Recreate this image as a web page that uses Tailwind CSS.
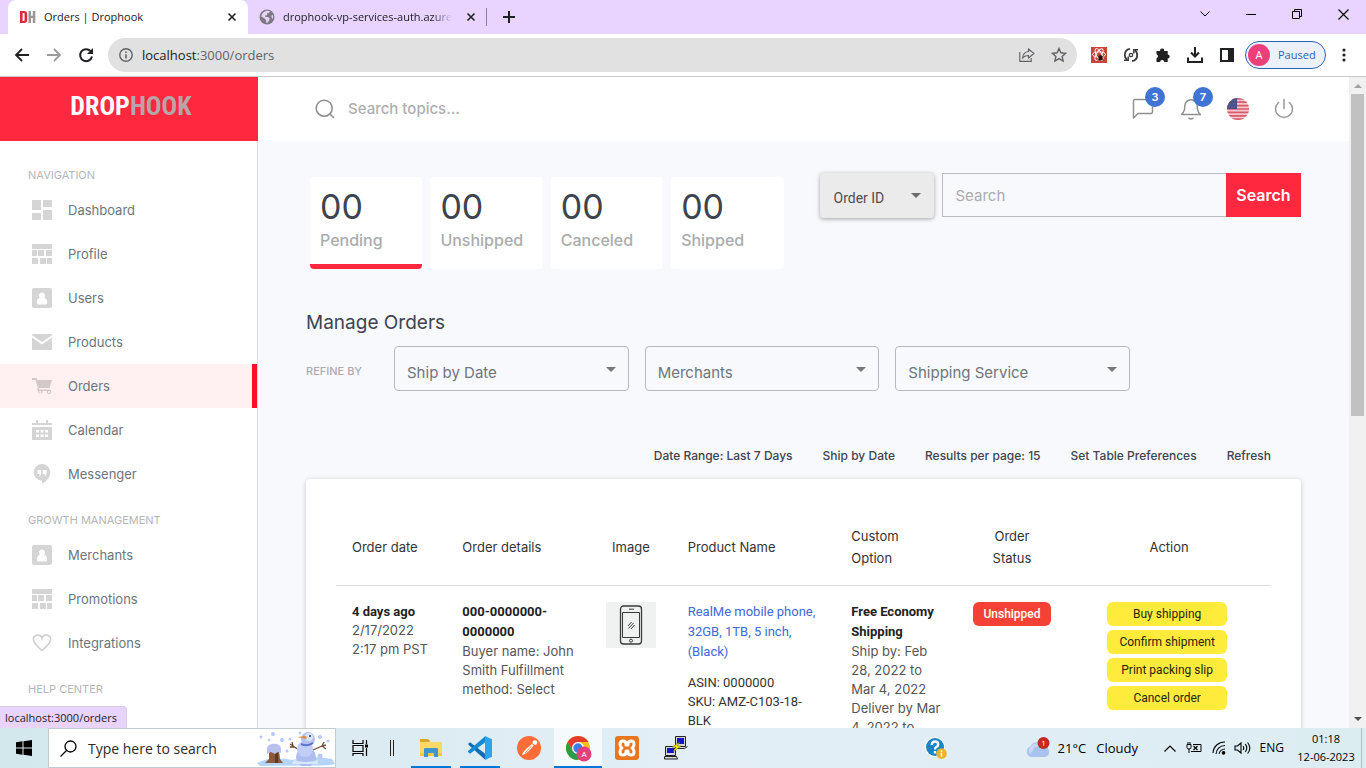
<!DOCTYPE html>
<html lang="en">
<head>
<meta charset="utf-8">
<title>Orders | Drophook</title>
<script src="https://cdn.jsdelivr.net/npm/@tailwindcss/browser@4"></script>
</head>
<body class="flex h-screen flex-col overflow-hidden bg-white font-['Inter','Liberation_Sans',sans-serif] text-[13px] text-[#3d4450]">

<!-- shared symbols -->
<svg class="hidden" aria-hidden="true">
  <symbol id="grid4" viewBox="0 0 20 20"><path d="M0 0h9v10H0zM11 0h9v7h-9zM0 13h9v7H0zM11 10h9v10h-9z"/></symbol>
  <symbol id="tiles" viewBox="0 0 20 20"><path d="M0 0h20v5H0zM0 6h5v6H0zM6 6h6v6H6zM14 6h6v6h-6zM0 14h6v6H0zM8 14h6v6H8zM15 14h5v6h-5z"/></symbol>
  <symbol id="person" viewBox="0 0 20 20"><path fill-rule="evenodd" d="M2 0h16a2 2 0 0 1 2 2v16a2 2 0 0 1-2 2H2a2 2 0 0 1-2-2V2a2 2 0 0 1 2-2zm8 4.500a3 3 0 0 0-2.200 5.100C6 10.300 4.800 12 4.800 14.500c0 1.400.5 2 1.700 2h7c1.200 0 1.700-.6 1.700-2 0-2.500-1.200-4.200-3-4.900A3 3 0 0 0 10 4.500z"/></symbol>
  <symbol id="caret" viewBox="0 0 10 5"><path d="M0 0h10L5 5z"/></symbol>
  <symbol id="close" viewBox="0 0 10 10"><path d="M1.500 1.500l7 7M8.500 1.500l-7 7" stroke="#202124" stroke-width="1.600"/></symbol>
</svg>

<!-- tab strip -->
<header class="flex h-[34px] shrink-0 items-stretch bg-[#e8d4ff] pl-2 font-['Open_Sans','Noto_Sans',sans-serif] text-[11px] text-[#202124]">
  <div class="flex w-[240px] items-center rounded-t-lg bg-white pl-3 pr-[11px]">
    <svg class="h-3 w-4 shrink-0" viewBox="0 0 16 12"><path fill="#e3263a" fill-rule="evenodd" d="M0 0h4c2 0 3.200 1 3.200 3v6c0 2-1.200 3-3.200 3H0zm2.600 2v8h.9c.8 0 1.100-.4 1.100-1.200V3.200c0-.8-.3-1.200-1.100-1.200z"/><path fill="#9a9596" d="M8.500 0h2.500v4.700h1.800V0h2.500v12h-2.500V7H11v5H8.500z"/></svg>
    <span class="ml-2 flex-1">Orders | Drophook</span>
    <button aria-label="Close tab"><svg class="size-[10px]"><use href="#close"/></svg></button>
  </div>
  <div class="flex w-[231px] items-center pl-[11px] pr-[3px]">
    <svg class="size-4 shrink-0" viewBox="0 0 16 16"><circle cx="8" cy="8" r="7.500" fill="#7f7b85"/><path fill="#e8d4ff" d="M6.500 2.200c1.300-.7 3.500-.3 4.600.4L9.500 4.100 8 4.300v1.900l-2 .2.300 1.500H9l1.700 1.700-.6 2-2 2.300-1-.5.200-2L5.400 9.300 2.300 7.400c.3-2.400 2-4.500 4.200-5.200zm5.800 4.600 1.600-.7c.4 1.500 0 3.200-.7 4.200z"/></svg>
    <span class="ml-2 flex-1 overflow-hidden whitespace-nowrap [mask-image:linear-gradient(to_right,black_88%,transparent)]">drophook-vp-services-auth.azure</span>
    <button class="ml-3.5" aria-label="Close tab"><svg class="size-[10px]"><use href="#close"/></svg></button>
  </div>
  <div class="my-2 ml-[7px] w-px bg-[#8c8199]"></div>
  <button class="ml-4" aria-label="New tab"><svg class="size-3" viewBox="0 0 12 12"><path d="M6 0v12M0 6h12" stroke="#202124" stroke-width="2"/></svg></button>
  <div class="ml-auto flex items-center pr-[17px] pb-1.5 text-black">
    <button class="mr-9" aria-label="Search tabs"><svg class="h-[6px] w-[10px]" viewBox="0 0 10 6"><path d="M.5.500 5 5 9.500.500" fill="none" stroke="currentColor"/></svg></button>
    <button class="mr-9" aria-label="Minimise"><svg class="h-[10px] w-[10px]" viewBox="0 0 10 10"><path d="M0 5.500h10" stroke="currentColor"/></svg></button>
    <button class="mr-9" aria-label="Restore"><svg class="size-[10px]" viewBox="0 0 10 10"><path d="M.5 2.500h7v7h-7zM2.500 2.500v-2h7v7h-2" fill="none" stroke="currentColor"/></svg></button>
    <button aria-label="Close window"><svg class="size-[11px]" viewBox="0 0 11 11"><path d="M.5.500l10 10M10.500.500l-10 10" stroke="currentColor" stroke-width="1.200"/></svg></button>
  </div>
</header>

<!-- address bar -->
<div class="flex h-[43px] shrink-0 items-center border-b border-[#c8c8c8] bg-white pl-3.5 pr-5 font-['Open_Sans','Noto_Sans',sans-serif] text-[#202124]">
  <button aria-label="Back"><svg class="size-4" viewBox="0 0 16 16"><path d="M15 8H2M8 2 2 8l6 6" fill="none" stroke="currentColor" stroke-width="1.800"/></svg></button>
  <button class="ml-4 text-[#9b9b9b]" aria-label="Forward"><svg class="size-4" viewBox="0 0 16 16"><path d="M1 8h13M8 2l6 6-6 6" fill="none" stroke="currentColor" stroke-width="1.800"/></svg></button>
  <button class="ml-4" aria-label="Reload"><svg class="size-4" viewBox="0 0 16 16"><path d="M12.500 4A6 6 0 1 0 14 9.500" fill="none" stroke="currentColor" stroke-width="2"/><path d="M15 1v6H9z" fill="currentColor"/></svg></button>
  <div class="ml-3.5 flex h-[34px] flex-1 items-center rounded-full bg-[#e1e1e1] pl-[11px] pr-2.5 text-[#5f6368]">
    <svg class="size-[14px] shrink-0" viewBox="0 0 14 14"><circle cx="7" cy="7" r="6.200" fill="none" stroke="currentColor" stroke-width="1.400"/><path d="M6.200 6.200h1.600v4.300H6.200zM6.200 3.500h1.600v1.600H6.200z" fill="currentColor"/></svg>
    <span class="ml-[9px] flex-1 pt-px text-[13px]"><span class="text-[#202124]">localhost</span>:3000/orders</span>
    <button aria-label="Share"><svg class="size-4" viewBox="0 0 16 16" fill="none" stroke="currentColor" stroke-width="1.100"><path d="M.8 5v9.400h11.400V11"/><path d="M9.500 2l5.500 4.500L9.500 11V8.500c-3 0-4.600.8-6 3 .3-4 2.400-6.600 6-7z"/></svg></button>
    <button class="ml-4" aria-label="Bookmark"><svg class="size-4" viewBox="0 0 16 16"><path d="M8 1.500l1.900 4.300 4.700.5-3.500 3.100 1 4.600L8 11.600 3.900 14l1-4.600L1.400 6.300l4.700-.5z" fill="none" stroke="currentColor" stroke-width="1.400"/></svg></button>
  </div>
  <div class="ml-3.5 flex items-center gap-4">
    <svg class="size-4" viewBox="0 0 16 16"><rect width="16" height="16" fill="#c9453b"/><g fill="none" stroke="#fff" stroke-width=".9"><ellipse cx="8" cy="7.500" rx="6.500" ry="2.600"/><ellipse cx="8" cy="7.500" rx="6.500" ry="2.600" transform="rotate(60 8 7.500)"/><ellipse cx="8" cy="7.500" rx="6.500" ry="2.600" transform="rotate(120 8 7.500)"/></g><ellipse cx="9.500" cy="10.800" rx="2" ry="2.800" fill="#2b1410"/><path d="M6.500 9l6 4M12.500 9l-6 4" stroke="#2b1410" stroke-width=".8"/></svg>
    <svg class="size-4" viewBox="0 0 16 16" fill="none" stroke="#3a3a3a" stroke-width="1.800"><path d="M7 1.800C3.500 2.400 1.800 5 1.800 8c0 2 .8 3.700 2.200 4.800M9 14.200c3.500-.6 5.200-3.200 5.200-6.200 0-2-.8-3.700-2.200-4.800"/><path d="M1 13.300h4.200V9.500M15 2.700h-4.200v3.800" stroke-width="1.500"/><circle cx="8" cy="8" r="1.700" stroke-width="1.300"/></svg>
    <svg class="size-4" viewBox="0 0 16 16"><path fill="#202124" d="M1.500 4h3.700a2 2 0 1 1 3.900 0h3.600v3.500a2 2 0 1 1 0 4V15H9.300a2.100 2.100 0 0 0-4.200 0H1.500v-3.800a2.100 2.100 0 0 0 0-4z"/></svg>
    <svg class="size-4" viewBox="0 0 16 16" fill="none" stroke="#202124" stroke-width="2"><path d="M8 0v9M4 5.500l4 4 4-4M1 10.500V15h14v-4.500"/></svg>
    <svg class="h-[14px] w-4" viewBox="0 0 16 14"><path fill="#202124" fill-rule="evenodd" d="M1 0h14v14H1zM3 2v10h6V2z"/></svg>
  </div>
  <button class="ml-2.5 flex h-[28px] w-[81px] items-center rounded-full border border-[#2a63b5] bg-[#ebf1fb] pl-0.5 text-[11px] text-[#2f5fb3]">
    <span class="flex size-[22px] items-center justify-center rounded-full bg-[#ec407a] text-[11px] text-white">A</span>
    <span class="ml-2">Paused</span>
  </button>
  <button class="ml-4" aria-label="Menu"><svg class="h-[14px] w-1" viewBox="0 0 4 14" fill="#202124"><circle cx="2" cy="2" r="1.600"/><circle cx="2" cy="7" r="1.600"/><circle cx="2" cy="12" r="1.600"/></svg></button>
</div>

<!-- page -->
<div class="relative flex min-h-0 flex-1">

  <aside class="flex w-[258px] shrink-0 flex-col overflow-hidden bg-white">
    <a href="#" class="flex h-16 shrink-0 items-center justify-center bg-[#ff283f] pb-1.5 pl-1 font-['Roboto_Condensed','Liberation_Sans_Narrow','DejaVu_Sans_Condensed',sans-serif] text-[26px] font-bold leading-8 text-white"><span>DROP</span><span class="text-[#b9a5a8]">HOOK</span></a>
    <nav class="flex-1 border-r border-[#dcdce2] pt-2.5 text-[#6c757d] [&_span]:pt-0.5">
      <h2 class="flex h-[37px] items-center pl-7 pt-[11px] text-[11px] text-[#b4b6b8]">NAVIGATION</h2>
      <a href="#" class="flex h-11 items-center pl-8"><svg class="mr-4 size-5 fill-[#d5d5d5]"><use href="#grid4"/></svg><span>Dashboard</span></a>
      <a href="#" class="flex h-11 items-center pl-8"><svg class="mr-4 size-5 fill-[#d5d5d5]"><use href="#tiles"/></svg><span>Profile</span></a>
      <a href="#" class="flex h-11 items-center pl-8"><svg class="mr-4 size-5 fill-[#d5d5d5]"><use href="#person"/></svg><span>Users</span></a>
      <a href="#" class="flex h-11 items-center pl-8"><svg class="mr-4 size-5 fill-[#d5d5d5]" viewBox="0 0 20 20"><path d="M0 2h20v1.300L10 10 0 3.300zM0 5.500l10 7 10-7V18H0z"/></svg><span>Products</span></a>
      <a href="#" class="flex h-11 items-center border-r-[5px] border-[#fb0f2f] bg-[#fff1f1] pl-8"><svg class="mr-4 size-5 fill-[#d3c9c9]" viewBox="0 0 20 20"><path d="M0 2h4.500l.8 2H20l-2.500 8H7.500l-.6 1.500H17a2.300 2.300 0 1 1-2.100 1.600h-4a2.300 2.300 0 1 1-5-.2L5 13.500l.8-2L3.500 4H0zM8.200 15a1 1 0 1 0 .01 0zM17 15a1 1 0 1 0 .01 0z" fill-rule="evenodd"/></svg><span>Orders</span></a>
      <a href="#" class="flex h-11 items-center pl-8"><svg class="mr-4 size-5 fill-[#d5d5d5]" viewBox="0 0 20 20"><path fill-rule="evenodd" d="M0 3h4V0h2v3h8V0h2v3h4v2H0zM0 7h20v13H0zM4 10v2.500h3V10zM8.500 10v2.500h3V10zM13 10v2.500h3V10zM4 14.500V17h3v-2.500zM8.500 14.500V17h3v-2.500zM13 14.500V17h3v-2.500z"/></svg><span>Calendar</span></a>
      <a href="#" class="flex h-11 items-center pl-8"><svg class="mr-4 size-5 fill-[#d5d5d5]" viewBox="0 0 20 20"><path fill-rule="evenodd" d="M10 0a8.300 8.300 0 0 1 8.300 8.300c0 4.700-3.300 8.700-8.300 11.700v-3.300A8.300 8.300 0 0 1 10 0zM5.500 6v4h2.300c0 1-.3 1.700-1.200 2.300 1.800-.3 2.700-1.500 2.700-3.300V6zm5.300 0v4h2.300c0 1-.3 1.700-1.200 2.300 1.800-.3 2.700-1.500 2.700-3.300V6z"/></svg><span>Messenger</span></a>
      <h2 class="flex h-[37px] items-center pl-7 pt-[11px] text-[11px] text-[#b4b6b8]">GROWTH MANAGEMENT</h2>
      <a href="#" class="flex h-11 items-center pl-8"><svg class="mr-4 size-5 fill-[#d5d5d5]"><use href="#person"/></svg><span>Merchants</span></a>
      <a href="#" class="flex h-11 items-center pl-8"><svg class="mr-4 size-5 fill-[#d5d5d5]"><use href="#tiles"/></svg><span>Promotions</span></a>
      <a href="#" class="flex h-11 items-center pl-8"><svg class="mr-4 size-5" viewBox="0 0 20 20"><path fill="none" stroke="#cfcfcf" stroke-width="1.600" d="M10 17.500C5 13 1.400 10 1.400 6.700a4.400 4.400 0 0 1 8.600-1.500 4.400 4.400 0 0 1 8.600 1.500C18.600 10 15 13 10 17.500z"/></svg><span>Integrations</span></a>
      <h2 class="flex h-[37px] items-center pl-7 pt-[11px] text-[11px] text-[#b4b6b8]">HELP CENTER</h2>
    </nav>
  </aside>

  <div class="flex min-w-0 flex-1 flex-col overflow-hidden bg-[#f8f9fd]">
    <div class="flex h-16 shrink-0 items-center bg-white pl-[57px] pr-[54px]">
      <svg class="size-5 text-[#8c8c8c]" viewBox="0 0 20 20"><g fill="none" stroke="currentColor" stroke-width="1.500"><circle cx="9.200" cy="9.200" r="8"/><path d="M15 15l4 4"/></g></svg>
      <input type="text" aria-label="Search topics" placeholder="Search topics..." class="ml-[13px] min-w-0 flex-1 bg-transparent text-[15px] font-medium outline-none placeholder:text-[#adafb1]">
      <button class="relative" aria-label="Messages"><svg class="h-[22px] w-[22px]" viewBox="0 0 22 22"><path fill="none" stroke="#8f8f8f" stroke-width="1.500" stroke-linejoin="round" d="M3 1.500h16a1.500 1.500 0 0 1 1.500 1.500v11a1.500 1.500 0 0 1-1.500 1.500H6L1.500 20V3A1.500 1.500 0 0 1 3 1.500z"/></svg><span class="absolute -top-[11px] left-[13px] flex size-5 items-center justify-center rounded-full bg-[#3f74d4] text-[11px] font-semibold text-white">3</span></button>
      <button class="relative ml-[26px]" aria-label="Notifications"><svg class="size-[22px]" viewBox="0 0 22 22"><path fill="none" stroke="#8f8f8f" stroke-width="1.500" stroke-linejoin="round" d="M1.500 16.500c2.500-2 3.300-4 3.300-8.500a6.200 6.200 0 0 1 12.400 0c0 4.500.8 6.500 3.300 8.500zM9 20.200q2 1.400 4 0" stroke-linecap="round"/></svg><span class="absolute -top-[11px] left-[13px] flex size-5 items-center justify-center rounded-full bg-[#3f74d4] text-[11px] font-semibold text-white">7</span></button>
      <button class="ml-[25px]" aria-label="Language"><svg class="size-[22px] overflow-hidden rounded-full" viewBox="0 0 22 22"><path fill="#f3c9cf" d="M0 0h22v22H0z"/><path stroke="#d95a6b" stroke-width="1.700" d="M0 .8h22M0 4.200h22M0 7.600h22M0 11h22M0 14.400h22M0 17.800h22M0 21.200h22"/><path fill="#4a4f86" d="M0 0h10v11H0z"/><path stroke="#6a6f9f" stroke-dasharray="1 1.500" d="M2 3h8M1 6h8M2 9h8"/></svg></button>
      <button class="ml-6" aria-label="Sign out"><svg class="size-[22px]" viewBox="0 0 22 22"><path fill="none" stroke="#9a9a9a" stroke-width="1.500" stroke-linecap="round" d="M11 1.500v9M5.500 4.500a8.500 8.500 0 1 0 11 0"/></svg></button>
    </div>

    <main class="min-h-0 flex-1 overflow-hidden px-12 pt-8">
      <div class="grid grid-cols-2 gap-8">
        <div class="grid grid-cols-4">
          <div class="m-1 h-[92px] overflow-hidden rounded border-b-[5px] border-[#ff283f] bg-white px-2.5 pt-2"><p class="text-[34px] leading-[43px]">00</p><p class="text-base leading-6 text-[#aaacad] font-medium">Pending</p></div>
          <div class="m-1 h-[92px] rounded bg-white px-2.5 pt-2"><p class="text-[34px] leading-[43px]">00</p><p class="text-base leading-6 text-[#aaacad] font-medium">Unshipped</p></div>
          <div class="m-1 h-[92px] rounded bg-white px-2.5 pt-2"><p class="text-[34px] leading-[43px]">00</p><p class="text-base leading-6 text-[#aaacad] font-medium">Canceled</p></div>
          <div class="m-1 h-[92px] rounded bg-white px-2.5 pt-2"><p class="text-[34px] leading-[43px]">00</p><p class="text-base leading-6 text-[#aaacad] font-medium">Shipped</p></div>
        </div>
        <form class="flex items-start">
          <div class="relative w-[114px]">
            <select aria-label="Search by" class="block h-[45px] w-full appearance-none rounded bg-[#ebebeb] pl-3.5 pt-1 font-['Roboto',sans-serif] text-sm text-[#4f4f4f] shadow-[0_1px_4px_rgba(0,0,0,0.35)]"><option>Order ID</option></select>
            <svg class="pointer-events-none absolute right-[13px] top-5 h-[5px] w-[10px] fill-[#6b6b6b]"><use href="#caret"/></svg>
          </div>
          <input type="text" aria-label="Search orders" placeholder="Search" class="ml-2 h-11 min-w-0 flex-1 border border-r-0 border-[#b9bbc1] bg-transparent px-[13px] text-[15px] outline-none placeholder:text-[#a9acaf]">
          <button type="button" class="h-11 w-[75px] bg-[#ff283f] text-base font-semibold text-white">Search</button>
        </form>
      </div>

      <h1 class="mt-[37px] text-[19px] leading-[26px]">Manage Orders</h1>
      <div class="mt-[10px] flex items-center">
        <span class="w-[88px] pt-1.5 text-[11px] font-medium text-[#a9acb0]">REFINE BY</span>
        <div class="grid max-w-[736px] flex-1 grid-cols-3 gap-4 text-[#6e757e]">
          <div class="relative"><select aria-label="Ship by Date" class="block h-[45px] w-full appearance-none rounded border border-[#b5b9bf] bg-transparent pl-3 pt-2.5 text-[15px]"><option>Ship by Date</option></select><svg class="pointer-events-none absolute right-[13px] top-[21px] h-[5px] w-[10px] fill-[#777]"><use href="#caret"/></svg></div>
          <div class="relative"><select aria-label="Merchants" class="block h-[45px] w-full appearance-none rounded border border-[#b5b9bf] bg-transparent pl-3 pt-2.5 text-[15px]"><option>Merchants</option></select><svg class="pointer-events-none absolute right-[13px] top-[21px] h-[5px] w-[10px] fill-[#777]"><use href="#caret"/></svg></div>
          <div class="relative"><select aria-label="Shipping Service" class="block h-[45px] w-full appearance-none rounded border border-[#b5b9bf] bg-transparent pl-3 pt-2.5 text-[15px]"><option>Shipping Service</option></select><svg class="pointer-events-none absolute right-[13px] top-[21px] h-[5px] w-[10px] fill-[#777]"><use href="#caret"/></svg></div>
        </div>
      </div>

      <div class="mt-[54px] flex h-[22px] items-center justify-end gap-[30px] pr-[30px] text-xs font-medium">
        <a href="#">Date Range: Last 7 Days</a><a href="#">Ship by Date</a><a href="#">Results per page: 15</a><a href="#">Set Table Preferences</a><a href="#">Refresh</a>
      </div>

      <section class="mt-3 rounded bg-white px-[30px] pb-[30px] pt-[30px] shadow-[0_1px_5px_rgba(0,0,0,0.2)]">
        <table class="w-full table-fixed text-left align-top leading-[19px] text-[#555]">
          <thead>
            <tr class="h-[76px] border-b border-[#dcdcdc] leading-[22px] text-[#333] *:px-4 *:font-normal">
              <th class="w-[11.8%]">Order date</th><th class="w-[15.4%]">Order details</th><th class="w-[8.7%] text-center">Image</th><th class="w-[17.5%]">Product Name</th><th class="w-[13%]">Custom Option</th><th class="w-[11.8%] text-center">Order<br>Status</th><th class="w-[21.8%] text-center">Action</th>
            </tr>
          </thead>
          <tbody>
            <tr class="align-top *:px-4 *:pt-4">
              <td class="whitespace-nowrap"><strong class="font-['Roboto',sans-serif] font-bold text-[#222]">4 days ago</strong><br>2/17/2022<br>2:17 pm PST</td>
              <td><strong class="block font-['Roboto',sans-serif] font-bold leading-5 text-[#222]">000-0000000-<br>0000000</strong>Buyer name: John<br>Smith Fulfillment<br>method: Select</td>
              <td><svg class="h-[46px] w-[50px] bg-[#f0f2f2]" viewBox="0 0 50 46" role="img" aria-label="Mobile phone" fill="none" stroke="#3a3a3a"><rect x="14.500" y="4" width="21" height="38" rx="3" stroke-width="1.300"/><path stroke-width="1" d="M16.500 10.500h17v25h-17zM23 7.200h5M22 24l3.500-4M22.500 26.500l5-5.500M25 27l3.500-4"/><circle cx="25" cy="38.700" r="1.500"/></svg></td>
              <td><a href="#" class="block font-['Roboto',sans-serif] leading-5 text-[#4169d9]">RealMe mobile phone, 32GB, 1TB, 5 inch, (Black)</a><p class="mt-[11px] font-['Roboto',sans-serif] text-[#333]">ASIN: 0000000<br>SKU: AMZ-C103-18-<br>BLK</p></td>
              <td class="whitespace-nowrap"><strong class="block font-['Roboto',sans-serif] font-bold leading-5 text-[#222]">Free Economy<br>Shipping</strong>Ship by: Feb<br>28, 2022 to<br>Mar 4, 2022<br>Deliver by Mar<br>4, 2022 to</td>
              <td><span class="flex h-6 items-center justify-center rounded-md bg-[#f44336] font-['Roboto',sans-serif] text-xs font-medium text-white">Unshipped</span></td>
              <td class="font-['Roboto',sans-serif] text-xs text-[#26240c]"><div class="ml-6 flex w-[120px] flex-col gap-1">
                <button class="h-6 rounded-md bg-[#ffeb3b]">Buy shipping</button><button class="h-6 rounded-md bg-[#ffeb3b]">Confirm shipment</button><button class="h-6 rounded-md bg-[#ffeb3b]">Print packing slip</button><button class="h-6 rounded-md bg-[#ffeb3b]">Cancel order</button>
              </div></td>
            </tr>
          </tbody>
        </table>
      </section>
    </main>
  </div>

  <!-- page scroll bar -->
  <div class="flex w-[17px] shrink-0 flex-col items-center bg-[#f1f1f1] py-[7px]">
    <svg class="h-1 w-2 shrink-0 rotate-180 fill-[#a3a3a3]" viewBox="0 0 10 5"><use href="#caret"/></svg>
    <div class="mt-1.5 h-[322px] w-[13px] bg-[#c1c1c1]"></div>
    <svg class="mt-auto h-1 w-2 shrink-0 fill-[#505050]" viewBox="0 0 10 5"><use href="#caret"/></svg>
  </div>

  <div class="absolute bottom-0 left-0 flex h-[22px] items-center rounded-tr border-r border-t border-[#d9cbe6] bg-[#e8d4ff] pl-[5px] pr-[9px] pt-px font-['Open_Sans','Noto_Sans',sans-serif] text-[11px] text-[#222]">localhost:3000/orders</div>
</div>

<!-- task bar -->
<footer class="flex h-10 shrink-0 items-stretch bg-gradient-to-r from-[#d3e8ec] via-[#e3eef6] to-[#dcedf2] font-['Open_Sans','Noto_Sans',sans-serif] text-black">
  <button class="flex w-12 items-center justify-center" aria-label="Start"><svg class="size-4" viewBox="0 0 16 16"><path d="M0 2.300 6.500 1.300v6.200H0zM7.500 1.200 16 0v7.500H7.500zM0 8.500h6.500v6.200L0 13.700zM7.500 8.500H16V16l-8.500-1.200z"/></svg></button>
  <div class="flex w-[288px] items-center border border-[#c3cbd0] bg-white pl-[11px]">
    <svg class="size-[17px] shrink-0" viewBox="0 0 17 17"><g fill="none" stroke="#000" stroke-width="1.300"><circle cx="10.500" cy="6.500" r="5.500"/><path d="M6.500 10.500.5 16.500"/></g></svg>
    <input type="text" aria-label="Type here to search" placeholder="Type here to search" class="ml-[11px] min-w-0 flex-1 bg-transparent pt-0.5 text-sm outline-none placeholder:text-[#2b2b2b]">
    <svg class="h-[36px] w-[78px] shrink-0" viewBox="0 0 78 36">
      <path fill="#b4d5f7" d="M0 33q15-7 35-3 20-5 40-1l3 5q-5 2-30 1.500L3 36z"/>
      <g fill="#b9c8f4"><circle cx="4" cy="7" r="1.500"/><circle cx="16" cy="4" r="2"/><circle cx="12" cy="10" r="1.300"/><circle cx="25" cy="10" r="2"/><circle cx="33" cy="9" r="1.500"/><circle cx="43" cy="3" r="1.500"/><circle cx="63" cy="7" r="2"/><circle cx="71" cy="11" r="1.600"/><circle cx="30" cy="21" r="1.500"/><circle cx="63" cy="26" r="2.500"/></g>
      <path fill="#8a5a3c" d="M12 20h10l1 9 3 4H8l4-4z"/><path fill="#5f3a25" d="M18 21h3v12h-3z"/><path fill="#b9c0ee" d="M10 19c0-7 14-7 14 0v4l-3-1-3 2-4-2-4 2z"/>
      <path fill="none" stroke="#704a34" stroke-width="1.300" d="M42 20l-9-6m3 2-1-4m2 5-4 0M56 20l9-4 4-1m-4 1 2-4m-2 4 4 3"/>
      <circle cx="49" cy="27" r="10" fill="#aebcf0"/><circle cx="48" cy="19" r="8" fill="#c3cef7"/><circle cx="51" cy="9" r="7" fill="#b3c1f3"/><circle cx="52" cy="7" r="4" fill="#d5e4ff"/><path fill="#e08a35" d="M50 9l-10-2 9-1z"/><circle cx="53" cy="6" r="1" fill="#334"/><path stroke="#5b74cf" stroke-width="2" d="M44 14q6 3 12-1" fill="none"/><path fill="#d6e9fc" d="M37 30q12 4 24 0v4H35z"/>
    </svg>
  </div>
  <button class="flex w-12 items-center justify-center" aria-label="Task view"><svg class="size-4" viewBox="0 0 16 16"><path fill="none" stroke="#000" stroke-width="1.200" d="M1 0v3.500h10V0M1 5.500h10v6H1zM1 16v-2.500h10V16M14.500 0v4M14.500 8v8"/><path d="M13 4.500h3v3h-3z"/></svg></button>
  <div class="flex w-4 items-center justify-center"><svg class="h-4 w-1" viewBox="0 0 4 16"><path stroke="#222" d="M.5 0v16M3.500 0v16"/></svg></div>
  <div class="ml-[11px] flex">
    <button class="mr-[9px] flex w-10 items-center justify-center border-b-2 border-[#0078d7] pt-0.5" aria-label="File Explorer"><svg class="h-5 w-[22px]" viewBox="0 0 22 20"><path fill="#dba52b" d="M0 1h8l2 2v4H0z"/><path fill="#ffd866" d="M0 4h22v14H0z"/><path fill="#fbc83c" d="M0 15h22v3H0z"/><path fill="#3b97d3" d="M4 11q0-1 1-1h12q1 0 1 1v8h-4v-4H8v4H4z"/></svg></button>
    <button class="mr-[9px] flex w-10 items-center justify-center border-b-2 border-[#0078d7] pt-0.5" aria-label="Code editor"><svg class="size-6" viewBox="0 0 24 24"><path fill="#0b6eb5" d="M0 8l2-1.700L17.500 18V24L1.500 9.800z"/><path fill="#1688cf" d="M0 16l2 1.700L17.500 6V0L0 15z"/><path fill="#2ba4ec" d="M17 0l7 3.200v17.600L17 24z"/></svg></button>
    <button class="mr-[5px] flex w-10 items-center justify-center" aria-label="Postman"><svg class="size-6" viewBox="0 0 24 24"><circle cx="12" cy="12" r="12" fill="#ff6c37"/><path fill="#fff" d="M15 8l1.800 1.600-5.500 6L7 18.500l-2 .3 1-2.300 3.800-4.200zM17.800 4.200a2.300 2.300 0 1 1-.6 4.400l-1.700-1.300a2.500 2.500 0 0 1 2.300-3.100z"/><path stroke="#ff6c37" stroke-width=".8" d="M8 17l7-7.500"/></svg></button>
    <button class="flex w-12 items-center justify-center border-b-2 border-[#0078d7] bg-[#f5fafc] pt-0.5" aria-label="Chrome"><svg class="size-7" viewBox="0 0 28 28"><circle cx="14" cy="14" r="12" fill="#fbc116"/><path fill="#e33b2e" d="M3.600 8A12 12 0 0 1 24.400 8H14l-5.200 9z"/><path fill="#2a9d4b" d="M3.600 8A12 12 0 0 0 14 26l5.200-9H8.800z"/><circle cx="14" cy="14" r="6" fill="#fff"/><circle cx="14" cy="14" r="4.700" fill="#3b7de9"/><circle cx="20" cy="20" r="7.500" fill="#e0407b"/><text x="20" y="23" text-anchor="middle" font-size="8" fill="#fff" font-family="Roboto">A</text></svg></button>
    <button class="flex w-[49px] items-center justify-center" aria-label="XAMPP"><svg class="size-6" viewBox="0 0 24 24"><rect width="24" height="24" rx="3" fill="#e9761f"/><path fill="none" stroke="#fff" stroke-width="3" stroke-linejoin="round" d="M5 8q0-3 3-3t3 3v1h2V8q0-3 3-3t3 3-2 4q2 1 2 4t-3 3-3-3v-1h-2v1q0 3-3 3t-3-3 2-4q-2-1-2-4z"/></svg></button>
    <button class="flex w-[49px] items-center justify-center" aria-label="PuTTY"><svg class="size-6" viewBox="0 0 24 24"><path fill="#d7d7d7" stroke="#222" d="M11.500.500h10v10h-10zM9.500 12.500h11l3-2M1.500 10.500h10v9h-10zM.5 20.500h12l1 2.500H.5z"/><path fill="#1515c8" d="M13 2h7v6h-7zM3 12h7v5H3z"/><path fill="#ffed00" stroke="#6b6500" stroke-width=".5" d="M16 6l-8 5h4l-3 5 8-6h-4z"/></svg></button>
  </div>
  <div class="ml-auto flex items-center pr-1">
    <svg class="size-[22px]" viewBox="0 0 22 22"><circle cx="10" cy="10" r="10" fill="#fff"/><circle cx="10" cy="10" r="9" fill="#1884c2"/><path fill="none" stroke="#fff" stroke-width="2.400" d="M6.800 8q0-3.500 3.200-3.500T13.200 7.500q0 1.500-2 2.500-1.200.700-1.200 2.500M10 14v2.500"/><circle cx="16.500" cy="16.500" r="5.300" fill="#efb321"/><path stroke="#fff" stroke-width="1.600" d="M16.500 13.200v1.600M16.500 15.800v4"/></svg>
    <svg class="ml-[78px] h-[22px] w-[25px]" viewBox="0 0 25 22"><path fill="#a9c2ee" d="M6 20a5.500 5.500 0 0 1-.5-10.500A7 7 0 0 1 18.500 10 5 5 0 0 1 20 20z"/><path fill="#c9d9f7" d="M5 17a5 5 0 0 1 1-7.500 7 7 0 0 1 11-1q-8 0-9 5z"/><circle cx="18.500" cy="6" r="6" fill="#c42b1c"/><text x="18.500" y="9" text-anchor="middle" font-size="8" fill="#fff" font-family="Open Sans">1</text></svg>
    <span class="ml-2 flex w-[82px] gap-2.5 whitespace-nowrap pt-0.5 text-[13px]"><span>21°C</span><span>Cloudy</span></span>
    <svg class="ml-6 h-[7px] w-[12px]" viewBox="0 0 12 7"><path fill="none" stroke="#000" stroke-width="1.200" d="M.5 6.500 6 1l5.500 5.500"/></svg>
    <svg class="ml-[10px] h-[12px] w-4" viewBox="0 0 16 12" fill="none" stroke="#000"><path d="M1 2.500h4v3q0 1.500-2 1.500t-2-1.500zM2 0v2.500M4 0v2.500M3 7v4M7 2.500h8v7H5"/><path d="M7.500 4l4 4M11.500 4l-4 4" stroke-width="1.200"/></svg>
    <svg class="ml-[10px] size-[14px]" viewBox="0 0 14 14" fill="none" stroke="#000" stroke-width="1.100"><path d="M1 12A11.500 11.500 0 0 1 13 1M4 13A9 9 0 0 1 13 4.500M7 13a6 6 0 0 1 6-5"/><circle cx="11.500" cy="11.800" r="1.300" fill="#000"/></svg>
    <svg class="ml-2 h-[14px] w-[17px]" viewBox="0 0 17 14" fill="none" stroke="#000" stroke-width="1.100"><path d="M1 5h2.500L7 2v10L3.500 9H1zM9 5q1.500 2 0 4M11.300 3.200q3 3.800 0 7.600M13.600 1.500q4.500 5.500 0 11"/></svg>
    <span class="ml-[9px] text-xs">ENG</span>
    <div class="ml-3 w-[60px] text-center text-[11px] leading-[18px]">01:18<br>12-06-2023</div>
    <div class="ml-[5px] h-10 w-px bg-[#aebfc6]"></div>
  </div>
</footer>
</body>
</html>
